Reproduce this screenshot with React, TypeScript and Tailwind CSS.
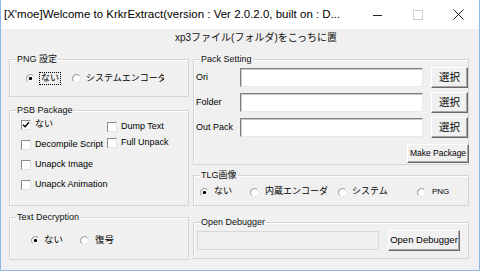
import React from "react";

const Radio = ({ checked }: { checked?: boolean }) => (
  <svg width="9" height="9" viewBox="0 0 9 9" className="shrink-0">
    <circle cx="4.5" cy="4.5" r="4" fill="#fff" />
    <path d="M1.67 7.33 A4 4 0 0 1 7.33 1.67" stroke="#8a8a8a" strokeWidth="1" fill="none" />
    <path d="M7.33 1.67 A4 4 0 0 1 1.67 7.33" stroke="#e6e6e6" strokeWidth="1" fill="none" />
    {checked && <circle cx="4.5" cy="4.5" r="1.7" fill="#000" />}
  </svg>
);

const Check = ({ checked }: { checked?: boolean }) => (
  <span className="shrink-0 w-[10px] h-[10px] bg-white border border-t-[#8a8a8a] border-l-[#8a8a8a] border-r-[#e3e3e3] border-b-[#e3e3e3] flex items-center justify-center">
    {checked && (
      <svg width="8" height="8" viewBox="0 0 8 8">
        <path d="M1 3.8 L3 5.8 L7 1.3" stroke="#000" strokeWidth="1.4" fill="none" />
      </svg>
    )}
  </span>
);

const Group = ({
  label,
  className,
  children,
}: {
  label: string;
  className: string;
  children?: React.ReactNode;
}) => (
  <div className={`relative border border-[#d5d5d5] shadow-[inset_1px_1px_0_#ffffff] ${className}`}>
    <span className="absolute -top-[7px] left-[6px] bg-[#f0f0f0] px-[1px] leading-[12px] text-[9px] text-[#111] whitespace-nowrap">
      {label}
    </span>
    {children}
  </div>
);

const Button = ({ children, className }: { children: React.ReactNode; className: string }) => (
  <div
    className={`flex items-center justify-center whitespace-nowrap bg-[#f0f0f0] border border-t-white border-l-white border-r-[#696969] border-b-[#696969] shadow-[inset_-1px_-1px_0_#a8a8a8] ${className}`}
  >
    {children}
  </div>
);

const Input = () => (
  <div className="w-[183px] h-[19px] bg-white border border-t-[#7f7f7f] border-l-[#7f7f7f] border-r-[#e8e8e8] border-b-[#e8e8e8] shadow-[inset_1px_1px_0_#c8c8c8]" />
);

export default function App() {
  return (
    <div className="w-[480px] h-[271px] overflow-hidden bg-[#f0f0f0] border-x border-b border-[#8fbbe8] flex flex-col font-['Liberation_Sans','Noto_Sans_CJK_JP',sans-serif] text-black">
      {/* title bar */}
      <div className="h-[29px] shrink-0 bg-white flex items-center">
        <span className="pl-[3px] text-[11.5px] leading-none text-black whitespace-nowrap w-[360px]">
          [X'moe]Welcome to KrkrExtract(version : Ver 2.0.2.0, built on : D...
        </span>
        <div className="flex items-center ml-[12px]">
          <svg width="10" height="10" viewBox="0 0 10 10">
            <path d="M0 5.5 H9" stroke="#222" strokeWidth="1" />
          </svg>
          <svg width="10" height="10" viewBox="0 0 10 10" className="ml-[30px]">
            <rect x="0.5" y="0.5" width="9" height="9" stroke="#cfcfcf" fill="none" />
          </svg>
          <svg width="11" height="11" viewBox="0 0 11 11" className="ml-[30px]">
            <path d="M0.5 0.5 L10.5 10.5 M10.5 0.5 L0.5 10.5" stroke="#222" strokeWidth="1" />
          </svg>
        </div>
      </div>

      {/* top text */}
      <div className="h-[16px] mt-[1px] pl-[174px] flex items-center text-[10px] leading-none text-[#111] whitespace-nowrap">
        xp3ファイル(フォルダ)をこっちに置
      </div>

      <div className="flex pl-[8px] mt-[13px] gap-[4px]">
        {/* left column */}
        <div className="w-[180px] flex flex-col">
          <Group label="PNG 設定" className="h-[38px] flex items-center pl-[16px] text-[9px]">
            <div className="w-[46px] flex items-center gap-[4px]">
              <Radio checked />
              <span className="border border-dotted border-black px-[1px] leading-[11px]">ない</span>
            </div>
            <div className="flex items-center gap-[5px]">
              <Radio />
              <span className="w-[78px] overflow-hidden whitespace-nowrap leading-[11px]">システムエンコーダ</span>
            </div>
          </Group>

          <Group label="PSB Package" className="h-[96px] mt-[13px] flex pl-[11px] text-[9px]">
            <div className="w-[86px] flex flex-col pt-[4px]">
              <div className="h-[20px] flex items-center gap-[4px]">
                <Check checked />
                <span>ない</span>
              </div>
              <div className="h-[20px] flex items-center gap-[4px]">
                <Check />
                <span className="whitespace-nowrap">Decompile Script</span>
              </div>
              <div className="h-[20px] flex items-center gap-[4px]">
                <Check />
                <span className="whitespace-nowrap">Unapck Image</span>
              </div>
              <div className="h-[20px] flex items-center gap-[4px]">
                <Check />
                <span className="whitespace-nowrap">Unapck Animation</span>
              </div>
            </div>
            <div className="flex flex-col pt-[8px]">
              <div className="h-[16px] flex items-center gap-[4px]">
                <Check />
                <span className="whitespace-nowrap">Dump Text</span>
              </div>
              <div className="h-[16px] flex items-center gap-[4px]">
                <Check />
                <span className="whitespace-nowrap">Full Unpack</span>
              </div>
            </div>
          </Group>

          <Group label="Text Decryption" className="h-[43px] mt-[11px] flex items-center pt-[3px] pl-[21px] text-[9.5px]">
            <div className="w-[49px] flex items-center gap-[4px]">
              <Radio checked />
              <span>ない</span>
            </div>
            <div className="flex items-center gap-[6px]">
              <Radio />
              <span>復号</span>
            </div>
          </Group>
        </div>

        {/* right column */}
        <div className="w-[276px] flex flex-col">
          <Group label="Pack Setting" className="h-[106px] flex flex-col pt-[7px] pl-[2px] text-[9px]">
            {["Ori", "Folder", "Out Pack"].map((l, i) => (
              <div key={l} className={`h-[21px] flex items-center ${i > 0 ? "mt-[4px]" : ""}`}>
                <span className="w-[44px] whitespace-nowrap">{l}</span>
                <Input />
                <Button className="ml-[8px] w-[37px] h-[21px] text-[10.5px]">選択</Button>
              </div>
            ))}
            <div className="flex justify-end mt-[6px] -mr-[1px]">
              <Button className="w-[62px] h-[19px] text-[8.5px]">Make Package</Button>
            </div>
          </Group>

          <Group label="TLG画像" className="h-[31px] mt-[10px] flex items-center pt-[3px] pl-[6px] text-[9px]">
            <div className="w-[50px] flex items-center gap-[5px]">
              <Radio checked />
              <span>ない</span>
            </div>
            <div className="w-[88px] flex items-center gap-[6px]">
              <Radio />
              <span className="whitespace-nowrap">内蔵エンコーダ</span>
            </div>
            <div className="w-[79px] flex items-center gap-[5px]">
              <Radio />
              <span className="whitespace-nowrap">システム</span>
            </div>
            <div className="flex items-center gap-[6px]">
              <Radio />
              <span className="text-[8px]">PNG</span>
            </div>
          </Group>

          <Group label="Open Debugger" className="h-[37px] mt-[16px] flex items-center pl-[3px] text-[9px]">
            <div className="w-[182px] h-[19px] bg-[#f0f0f0] border border-[#d9d9d9]" />
            <Button className="ml-[9px] w-[72px] h-[21px] text-[9.5px]">Open Debugger</Button>
          </Group>
        </div>
      </div>
    </div>
  );
}
